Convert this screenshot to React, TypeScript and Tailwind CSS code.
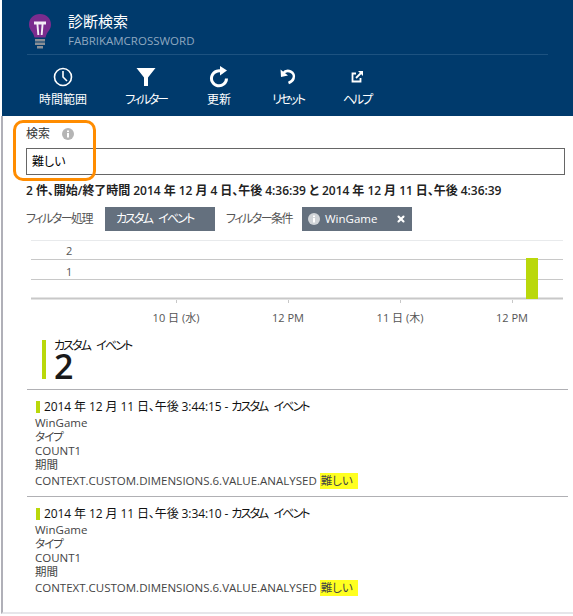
import React from 'react';
import { X } from 'lucide-react';

const sans = 'font-["Open_Sans","Noto_Sans_CJK_JP",sans-serif]';

function Bulb() {
  return (
    <svg width="24" height="36" viewBox="0 0 24 36" className="shrink-0">
      <path d="M12 1C5.500 1 1 5.600 1 11.500c0 4.300 2.600 6.600 4.200 9.400.8 1.400 1 2.600 1.200 3.600h11.200c.2-1 .4-2.200 1.200-3.600C20.400 18.100 23 15.800 23 11.500 23 5.600 18.500 1 12 1z" fill="#7b2c8e" />
      <path d="M6 8.500h12v3h-2.500l-.9 10.500h-1.900l.9-10.500h-3.200l.9 10.500H9.400l-.9-10.500H6z" fill="#f4eef6" />
      <rect x="7" y="26" width="10" height="2.500" fill="#8a8f96" />
      <rect x="7" y="29.500" width="10" height="2.500" fill="#8a8f96" />
      <rect x="9" y="33" width="6" height="2.500" fill="#8a8f96" />
    </svg>
  );
}

function InfoDot({ className }: { className: string }) {
  return (
    <svg viewBox="0 0 12 12" className={className}>
      <circle cx="6" cy="6" r="6" fill="currentColor" />
      <rect x="5" y="5" width="2" height="4.500" fill="white" />
      <rect x="5" y="2.500" width="2" height="1.600" fill="white" />
    </svg>
  );
}

const tools = [
  {
    label: '時間範囲',
    width: 'w-[50px]',
    icon: (
      <svg width="22" height="22" viewBox="0 0 22 22" fill="none" stroke="white" strokeWidth="1.600">
        <circle cx="11" cy="11" r="8.500" />
        <path d="M11 5v6l4 4" />
      </svg>
    ),
  },
  {
    label: 'フィルター',
    width: 'ml-[23px] w-[70px] tracking-[-2.200px]',
    icon: (
      <svg width="22" height="22" viewBox="0 0 22 22" fill="white">
        <path d="M1.500 2h19l-7.500 9.500V20H9v-8.500z" />
      </svg>
    ),
  },
  {
    label: '更新',
    width: 'w-[76px]',
    icon: (
      <svg width="22" height="22" viewBox="0 0 22 22" fill="none" stroke="white" strokeWidth="3">
        <path d="M15 6A7.500 7.500 0 1 0 18.500 12.500" />
        <path d="M12 0v9.500l7-5z" fill="white" stroke="none" />
      </svg>
    ),
  },
  {
    label: 'リセット',
    width: 'w-[62px] tracking-[-2px]',
    icon: (
      <svg width="22" height="22" viewBox="0 0 22 22" fill="none" stroke="white" strokeWidth="2.600">
        <path d="M6 7.500c2-2.500 5-3 7.500-2 3 1.300 4 4.500 3 7-.7 1.900-2.500 3.500-5 4.500" />
        <path d="M3.500 3.500l.5 7.500 7-1.500z" fill="white" stroke="none" />
      </svg>
    ),
  },
  {
    label: 'ヘルプ',
    width: 'w-[76px] tracking-[-2px]',
    icon: (
      <svg width="22" height="22" viewBox="0 0 22 22" fill="none" stroke="white" strokeWidth="1.800">
        <path d="M10 7.500H6.500v8h8V12" />
        <path d="M10 12l5-5" />
        <path d="M12 5h5v5z" fill="white" stroke="none" />
      </svg>
    ),
  },
];

function Chart() {
  const ticks = [177, 289, 401, 513];
  const labels = [
    { x: 176, t: '10 日 (水)' },
    { x: 288, t: '12 PM' },
    { x: 400, t: '11 日 (木)' },
    { x: 512, t: '12 PM' },
  ];
  return (
    <svg width="536" height="90" viewBox="29 237 536 90" className="block" fontFamily="Open Sans, Noto Sans CJK JP, sans-serif" fontSize="11" fill="#555">
      <line x1="31" x2="563" y1="240.500" y2="240.500" stroke="#e8eaec" />
      <line x1="31" x2="563" y1="259.500" y2="259.500" stroke="#c8c8c8" />
      <line x1="31" x2="563" y1="279.500" y2="279.500" stroke="#c8c8c8" />
      <line x1="31" x2="563" y1="298.500" y2="298.500" stroke="#c8c8c8" strokeWidth="2" />
      <text x="66" y="255">2</text>
      <text x="66" y="276">1</text>
      {ticks.map(x => (
        <line key={x} x1={x - 0.5} x2={x - 0.5} y1="300" y2="303" stroke="#c8c8c8" />
      ))}
      {labels.map(l => (
        <text key={l.x} x={l.x} y="322" textAnchor="middle">
          {l.t}
        </text>
      ))}
      <rect x="526" y="258" width="12" height="41" fill="#bad80a" />
    </svg>
  );
}

function ResultItem({ time }: { time: string }) {
  return (
    <div className="h-[107px] border-b border-[#b0b0b4] pl-2 pt-[10px] text-[11.500px] leading-[14px] text-[#444] last:border-b-0">
      <div className="flex items-center gap-1 text-[12px] text-[#111]">
        <span className="ml-px h-3 w-1 bg-[#bad80a]" />
        <span className="tracking-[-0.1px]">
          2014 年 12 月 11 日、午後 {time} - <span className="tracking-[-1.900px] [word-spacing:5px]">カスタム イベント</span>
        </span>
      </div>
      <div className="mt-[2px]">WinGame</div>
      <div className="tracking-[-1px]">タイプ</div>
      <div>COUNT1</div>
      <div>期間</div>
      <div className="mt-px">
        CONTEXT.CUSTOM.DIMENSIONS.6.VALUE.ANALYSED{' '}
        <span className="inline-block w-[38px] bg-[#ffff20] py-px pl-px">難しい</span>
      </div>
    </div>
  );
}

export default function App() {
  return (
    <div className={`relative h-[616px] w-[573px] overflow-hidden bg-white [font-feature-settings:"palt"] ${sans}`}>
      <header className="ml-[2px] h-[116px] bg-[#003a6c] text-white">
        <div className="mx-[25px] flex h-[55px] items-start gap-[16px] border-b border-[#1d5280] pl-[1px] pt-[13px]">
          <Bulb />
          <div>
            <div className="text-[15px] leading-[17px]">診断検索</div>
            <div className="mt-[4px] text-[11.500px] leading-[13px] text-[#8fa8c0]">FABRIKAMCROSSWORD</div>
          </div>
        </div>
        <nav className="flex pl-[36px] pt-[11px]">
          {tools.map(tool => (
            <div key={tool.label} className={`flex flex-col items-center gap-[5px] text-[12px] leading-[14px] ${tool.width}`}>
              {tool.icon}
              <span className="whitespace-nowrap">{tool.label}</span>
            </div>
          ))}
        </nav>
      </header>

      <main className="ml-[1px] h-[498px] border-b-[2px] border-l-[2px] border-l-[#b0b0b8] border-b-[#e6e6ea] pl-[23px] pr-[5px]">
        <div className="flex items-center gap-[12px] pt-[10px] text-[12px] leading-[16px] text-[#333]">
          <span>検索</span>
          <InfoDot className="h-3 w-3 text-[#b5b5b5]" />
        </div>
        <div className="mt-[6px] mr-[3px] flex h-[27px] items-center border border-[#666] pl-[5px] text-[12px] text-black">難しい</div>
        <div className="mt-[9px] text-[12px] leading-[14px] font-semibold tracking-[-0.04px] whitespace-nowrap text-[#222]">
          2 件、開始/終了時間 2014 年 12 月 4 日、午後 4:36:39 と 2014 年 12 月 11 日、午後 4:36:39
        </div>
        <div className="mt-[9px] flex h-6 items-center text-[12px] text-[#555]">
          <span className="w-[79px] tracking-[-1.500px] whitespace-nowrap">フィルター処理</span>
          <span className="flex h-6 w-[110px] items-center bg-[#64707e] pl-[11px] tracking-[-1.900px] [word-spacing:5px] text-white">カスタム イベント</span>
          <span className="w-[87px] pl-[11px] tracking-[-1.500px] whitespace-nowrap">フィルター条件</span>
          <span className="flex h-6 w-[110px] items-center bg-[#64707e] pl-[6px] text-[11.500px] text-white">
            <InfoDot className="h-3 w-3 text-[#d0d4d8]" />
            <span className="ml-[5px] flex-1">WinGame</span>
            <X className="mr-[6px] h-[10px] w-[10px]" strokeWidth={5} />
          </span>
        </div>
        <div className="mt-[6px] ml-[3px]">
          <Chart />
        </div>
        <div className="mt-[13px] ml-[16px] flex h-[39px] gap-[8px]">
          <span className="w-1 bg-[#bad80a]" />
          <div>
            <div className="text-[12px] leading-[12px] tracking-[-1.900px] [word-spacing:5px] text-[#111]">カスタム イベント</div>
            <div className="text-[34px] leading-[28px] font-semibold text-[#1a1a1a]">2</div>
          </div>
        </div>
        <div className="mt-[10px] ml-px border-t border-[#b0b0b4]">
          <ResultItem time="3:44:15" />
          <ResultItem time="3:34:10" />
        </div>
      </main>

      {/* callout drawn over the search box */}
      <div className="absolute top-[120px] left-[13px] h-[61px] w-[83px] rounded-[10px] border-[3px] border-[#ff8c00]" />
    </div>
  );
}
